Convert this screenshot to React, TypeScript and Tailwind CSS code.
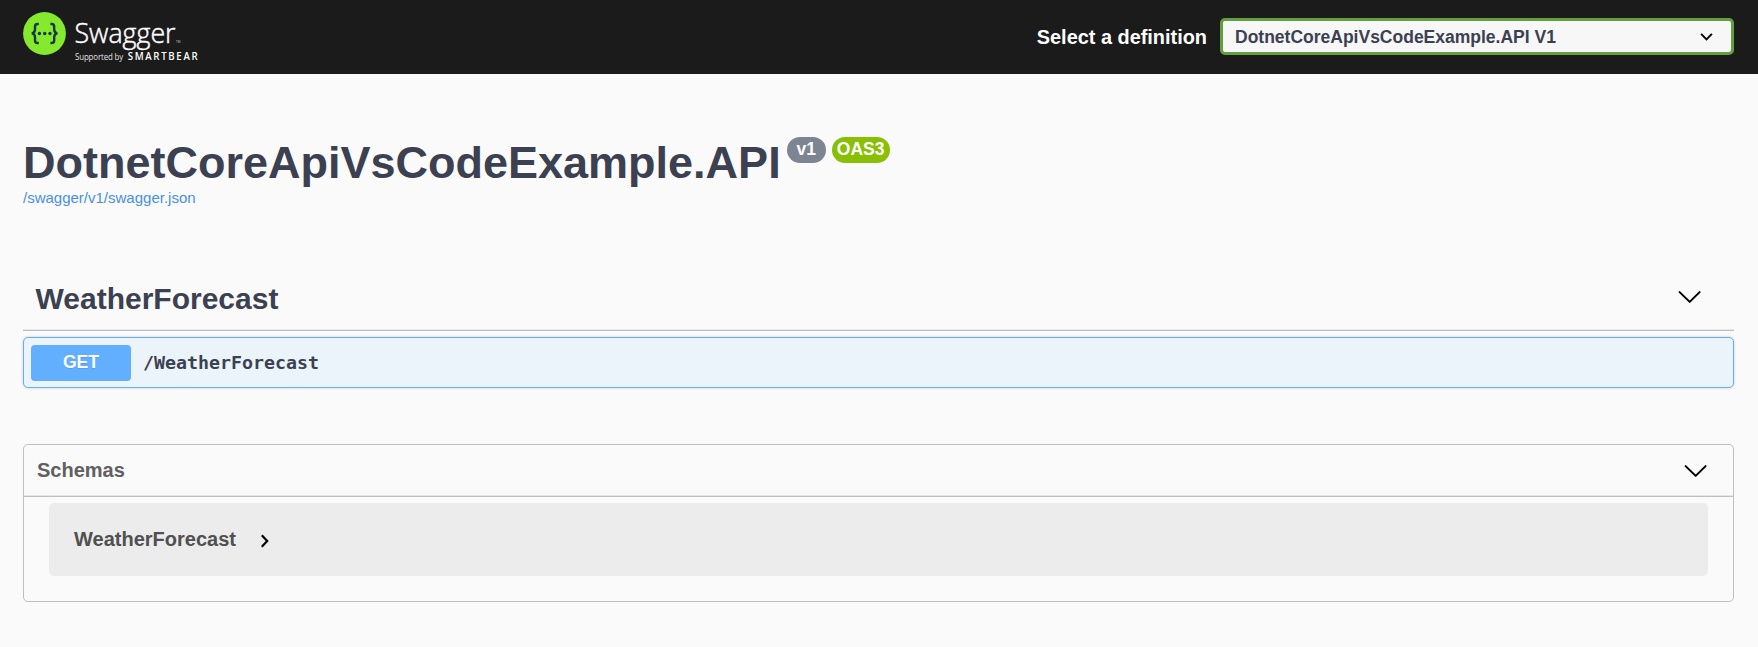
import React from 'react';

function SwaggerLogo() {
  return (
    <svg width="180" height="54" viewBox="0 0 180 54" className="block shrink-0" aria-label="Swagger">
      <circle cx="21.5" cy="21.5" r="21.4" fill="#85ea2d" />
      <g fill="none" stroke="#173647" strokeWidth="2.4">
        <path d="M15.8 12h-1.2q-2.6 0-2.6 2.6v3q0 3.3-3.2 3.8q3.2.5 3.2 3.8v3.2q0 2.6 2.6 2.6h1.2" />
        <path d="M27.4 12h1.2q2.6 0 2.6 2.6v3q0 3.3 3.2 3.8q-3.2.5-3.2 3.8v3.2q0 2.6-2.6 2.6h-1.2" />
      </g>
      <g fill="#173647">
        <circle cx="16.4" cy="21.5" r="1.7" />
        <circle cx="21.7" cy="21.5" r="1.7" />
        <circle cx="27" cy="21.5" r="1.7" />
      </g>
      <g fill="#ffffff" className="font-['Open_Sans',sans-serif]">
        <text x="51.5" y="30.6" fontSize="27" fontWeight="300" stroke="#ffffff" strokeWidth="0.45" textLength="101" lengthAdjust="spacingAndGlyphs">Swagger</text>
        <text x="153" y="30.5" fontSize="3" textLength="4.5" fillOpacity=".8">TM</text>
        <g transform="translate(52 48) scale(.92 1)">
          <text x="0" y="0" fontSize="8.6" fontWeight="400" textLength="52.5" lengthAdjust="spacing" fillOpacity=".9">Supported by</text>
        </g>
        <g transform="translate(104.7 48) scale(.88 1)">
          <text x="0" y="0" fontSize="11" fontWeight="600" textLength="79.5" lengthAdjust="spacing">SMARTBEAR</text>
        </g>
      </g>
    </svg>
  );
}

function Chevron() {
  return (
    <svg width="23" height="14" viewBox="0 0 23 14" className="block shrink-0" fill="none" stroke="#000" strokeWidth="2" strokeLinecap="round" strokeLinejoin="round">
      <path d="M1.6 2.1L11.7 11.9L21.6 2.1" />
    </svg>
  );
}

export default function App() {
  return (
    <div className="min-h-[647px] w-full bg-[#fafafa] font-['Liberation_Sans',Arial,sans-serif] text-[#3b4151]">
      <header className="flex h-[74px] items-center justify-between bg-[#1b1b1b] pl-[23px] pr-6">
        <div className="h-[50px]">
          <SwaggerLogo />
        </div>
        <label className="flex items-center gap-[13px]">
          <span className="mt-[-1px] text-[19.9px] leading-[30px] font-bold text-white">Select a definition</span>
          <div className="mt-[-1px] flex h-[37px] w-[514px] items-center justify-between rounded-[5px] border-3 border-[#62a03f] bg-[#f7f7f7] pl-3 pr-[18px]">
            <span className="text-[17.5px] leading-[30px] font-bold">DotnetCoreApiVsCodeExample.API V1</span>
            <svg width="13" height="9" viewBox="0 0 13 9" fill="none" stroke="#000" strokeWidth="1.9">
              <path d="M1.1 1.9L6.5 7.3L11.9 1.9" />
            </svg>
          </div>
        </label>
      </header>

      <main className="pl-[23px] pr-6">
        <section className="pt-[63px]">
          <div className="flex h-[51px] items-start">
            <h1 className="pt-px text-[45px] leading-[50px] font-bold">DotnetCoreApiVsCodeExample.API</h1>
            <div className="ml-[6px] flex gap-[6px] text-[17.5px] leading-6 font-bold text-white">
              <span className="h-[26px] w-[39px] rounded-full bg-[#7d8492] text-center">v1</span>
              <span className="h-[26px] w-[58px] rounded-full bg-[#89bf04] text-center">OAS3</span>
            </div>
          </div>
          <a className="block text-[15px] leading-5 text-[#4990e2]">/swagger/v1/swagger.json</a>
        </section>

        <section className="pt-[71px]">
          <div className="flex h-[52px] items-start justify-between border-b border-[#bfbfc2] pl-[12.5px] pr-[33px] shadow-[inset_0_-1px_0_#e6e6e7]">
            <h2 className="text-[30px] leading-10 font-bold">WeatherForecast</h2>
            <div className="pt-[11px]">
              <Chevron />
            </div>
          </div>
          <div className="mt-[6px] flex h-[51px] items-center rounded-[5px] border border-[#61affe] bg-[#ebf3fb] pl-[7px] shadow-[0_0_3px_rgba(0,0,0,0.19)]">
            <span className="h-9 w-[100px] rounded-[4px] bg-[#61affe] text-center text-[17.5px] leading-[34px] font-bold text-white [text-shadow:0_1px_0_rgba(0,0,0,0.1)]">
              GET
            </span>
            <span className="pl-3 font-['DejaVu_Sans_Mono',monospace] text-[18.27px] leading-6 font-bold">/WeatherForecast</span>
          </div>
        </section>

        <section className="mt-14 h-[158px] rounded-[5px] border border-[#bfbfc2] text-[20px] font-bold">
          <div className="flex h-[52px] items-center justify-between border-b border-[#bfbfc2] pl-[13px] pr-[26px] text-[#606060] shadow-[inset_0_-1px_0_#e6e6e7]">
            <h3 className="mb-[2px] leading-[48px]">Schemas</h3>
            <Chevron />
          </div>
          <div className="mx-[25px] mt-[6px] flex h-[73px] items-center rounded-[5px] bg-[#ececec] pl-[25px] text-[#505050]">
            <span className="mb-[2px]">WeatherForecast</span>
            <svg width="10" height="14" viewBox="0 0 10 14" className="mt-[3px] ml-6" fill="none" stroke="#000" strokeWidth="2.2">
              <path d="M1.8 1.3L7.2 7L1.8 12.7" />
            </svg>
          </div>
        </section>
      </main>
    </div>
  );
}
